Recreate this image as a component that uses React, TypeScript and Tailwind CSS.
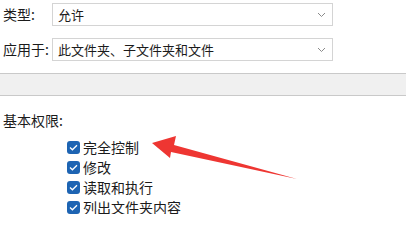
import React from "react";

const perms = ["完全控制", "修改", "读取和执行", "列出文件夹内容"];

function Chevron() {
  return (
    <svg width="9" height="6" viewBox="0 0 9 6" className="shrink-0">
      <path d="M1 1 L4.5 4.5 L8 1" fill="none" stroke="#8a8a8a" strokeWidth="1" />
    </svg>
  );
}

function Select({ value }: { value: string }) {
  return (
    <div className="flex h-[23px] w-[281px] items-center justify-between border border-[#d4d4d4] bg-white pl-[5px] pr-[6px]">
      <span className="text-[13px] leading-none text-[#1b1b1b]">{value}</span>
      <Chevron />
    </div>
  );
}

function Check({ label }: { label: string }) {
  return (
    <div className="flex h-[20px] items-center gap-[3px]">
      <div className="flex h-[13px] w-[13px] items-center justify-center rounded-[3px] bg-[#1d64b3]">
        <svg width="9" height="7" viewBox="0 0 9 7">
          <path d="M1 3.6 L3.4 5.8 L8 1.2" fill="none" stroke="#fff" strokeWidth="1.3" />
        </svg>
      </div>
      <span className="text-[14px] leading-none text-[#1b1b1b]">{label}</span>
    </div>
  );
}

export default function App() {
  return (
    <div
      className="relative h-[214px] w-[406px] overflow-hidden bg-white"
      style={{ fontFamily: '"Noto Sans CJK SC", "Noto Sans", sans-serif' }}
    >
      <div className="flex items-center pt-[3px]">
        <span className="w-[52px] pl-[3px] text-[14px] text-[#1b1b1b]">类型:</span>
        <Select value="允许" />
      </div>
      <div className="mt-[12px] flex items-center">
        <span className="w-[52px] pl-[3px] text-[14px] text-[#1b1b1b]">应用于:</span>
        <Select value="此文件夹、子文件夹和文件" />
      </div>

      <div className="mt-[12px] h-[23px] border-y border-[#c9c9c9] bg-[#f0f0f0]" />

      <div className="mt-[14px] h-[20px] pl-[3px] text-[14px] leading-[20px] text-[#1b1b1b]">
        基本权限:
      </div>

      <div className="mt-[7px] flex flex-col pl-[67px]">
        {perms.map((p) => (
          <Check key={p} label={p} />
        ))}
      </div>

      <svg
        className="pointer-events-none absolute left-0 top-0"
        width="406"
        height="214"
        viewBox="0 0 406 214"
      >
        <polygon
          points="152,143 176,136 174,145 297,179 171,152 170,158"
          fill="#ee3632"
        />
      </svg>
    </div>
  );
}
